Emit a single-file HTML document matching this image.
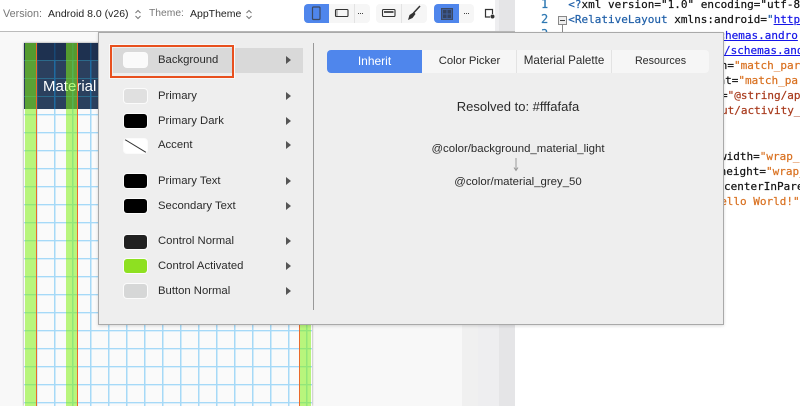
<!DOCTYPE html>
<html><head><meta charset="utf-8">
<style>
html,body{margin:0;padding:0;width:800px;height:406px;overflow:hidden;background:#fff}
body{position:relative;font-family:"Liberation Sans",sans-serif;color:#2a2a2a}
div,span.a{position:absolute}
.t{white-space:nowrap;font-size:11.300px;line-height:16px}
.c{position:absolute;white-space:pre;font:11px/15px "DejaVu Sans Mono",monospace;color:#111;-webkit-text-stroke:.2px}
.b{color:#1f5fa8}.u{color:#1515e8;text-decoration:underline}.o{color:#d9701f}.r{color:#a83a1c}
.g{position:absolute;background:rgba(130,240,20,.55)}
.ol{position:absolute;width:1px;background:#ea6a2a}
.sw{left:124px;width:23px;height:14px;border-radius:3px;box-shadow:0 0 0 1px #fbfbfb}
.ar{left:286px;width:0;height:0;border-left:5px solid #555;border-top:4.5px solid transparent;border-bottom:4.5px solid transparent}
.lab{left:158px}
.tab{top:50px;height:23px;line-height:22px;text-align:center;font-size:11.300px;white-space:nowrap}
</style></head><body>

<!-- top bar -->
<div style="left:0;top:0;width:800px;height:31px;background:#fff"></div>
<div class="t" style="left:3px;top:6px;color:#777;font-size:10.800px">Version:</div>
<div class="t" style="left:48px;top:6px;color:#222;font-size:10.500px">Android 8.0 (v26)</div>
<svg style="position:absolute;left:134px;top:9px" width="8" height="11"><path d="M1.500 4L4 1.500L6.500 4M1.500 7L4 9.500L6.500 7" fill="none" stroke="#777" stroke-width="1"/></svg>
<div class="t" style="left:149px;top:6px;color:#777;font-size:10.300px">Theme:</div>
<div class="t" style="left:190px;top:6px;color:#222;font-size:10.500px">AppTheme</div>
<svg style="position:absolute;left:245px;top:9px" width="8" height="11"><path d="M1.500 4L4 1.500L6.500 4M1.500 7L4 9.500L6.500 7" fill="none" stroke="#777" stroke-width="1"/></svg>

<!-- toolbar groups -->
<div style="left:304px;top:4px;width:66px;height:19px;background:#f6f6f6;border-radius:4px"></div>
<div style="left:304px;top:4px;width:25px;height:19px;background:#4f86ec;border-radius:4px 0 0 4px"></div>
<div style="left:354px;top:4px;width:1px;height:19px;background:#e3e3e3"></div>
<div style="left:376px;top:4px;width:51px;height:19px;background:#f6f6f6;border-radius:4px"></div>
<div style="left:401px;top:4px;width:1px;height:19px;background:#e3e3e3"></div>
<div style="left:434px;top:4px;width:40px;height:19px;background:#f6f6f6;border-radius:4px"></div>
<div style="left:434px;top:4px;width:25px;height:19px;background:#4f86ec;border-radius:4px 0 0 4px"></div>
<svg style="position:absolute;left:300px;top:0" width="200" height="30" fill="none">
<rect x="12.500" y="7" width="7.500" height="12.500" rx="1" stroke="#3c4a63" stroke-width="1.200"/>
<rect x="35.500" y="9.500" width="12.500" height="7" rx="1" stroke="#333" stroke-width="1.100"/>
<path d="M37 10v6" stroke="#888" stroke-width="1"/>
<path d="M58 13.500h1M60 13.500h1M62 13.500h1" stroke="#444" stroke-width="1"/>
<rect x="82.500" y="9.500" width="12.500" height="7" rx="1" stroke="#333" stroke-width="1.100"/>
<rect x="84" y="11" width="9.500" height="2" fill="#555"/>
<path d="M120 6L113.500 13" stroke="#333" stroke-width="1.500"/>
<path d="M114 12L109.500 15L108 20L112.500 18L115.500 14Z" fill="#333"/>
<rect x="141.500" y="8.500" width="11" height="11" fill="#3f5f9c" stroke="#3d4a63" stroke-width="1"/>
<path d="M143 10h3.500v3.500h-3.500zM147.500 10h3.500v3.500h-3.500zM143 14.500h3.500v3.500h-3.500zM147.500 14.500h3.500v3.500h-3.500z" fill="#33425e"/>
<path d="M164 13.500h1M166 13.500h1M168 13.500h1" stroke="#444" stroke-width="1"/>
</svg>

<!-- background left / right -->
<div style="left:0;top:31px;width:462px;height:375px;background:#f8f8f8"></div>
<div style="left:462px;top:31px;width:16px;height:375px;background:#f0f0f0"></div>
<div style="left:478px;top:31px;width:21px;height:375px;background:#eeeef0"></div>
<div style="left:499px;top:0;width:16px;height:406px;background:#e5e5e7"></div>
<div style="left:479px;top:5px;width:20px;height:27px;background:#fff;clip-path:polygon(0 0,100% 0,100% 100%,30% 100%,0 70%)"></div>
<div style="left:495px;top:0;width:4px;height:32px;background:#eeeef0"></div>
<svg style="position:absolute;left:483px;top:8px" width="14" height="12" fill="none"><path d="M7 9H2.500V1.500H9.500V6" stroke="#333" stroke-width="1.200"/><circle cx="9.500" cy="8.500" r="2" fill="#333"/></svg>
<div style="left:0;top:31px;width:515px;height:1px;background:#bbb"></div>

<!-- code editor -->
<div class="c" style="left:541px;top:-3px;color:#2f79b3;font-size:12px">1</div>
<div class="c" style="left:541px;top:12px;color:#2f79b3;font-size:12px">2</div>
<div class="c" style="left:541px;top:27px;color:#2f79b3;font-size:12px">3</div>
<div style="left:558px;top:16px;width:7px;height:7px;border:1px solid #888;background:#eee"></div>
<div style="left:560px;top:20px;width:5px;height:1px;background:#444"></div>
<div style="left:562px;top:25px;width:1px;height:10px;background:#888"></div>
<div class="c" style="left:568.300px;top:-3px"><span class="b">&lt;?</span>xml version="1.0" encoding="utf-8</div>
<div class="c" style="left:568.300px;top:12px"><span class="b">&lt;RelativeLayout</span> xmlns:android=<span class="b">"</span><span class="u">http</span></div>
<div class="c u" style="left:718.400px;top:28px;color:#1515e8">chemas.andro</div>
<div class="c u" style="left:724px;top:43px;color:#1515e8">/schemas.and</div>
<div class="c" style="left:720.800px;top:58px">n=<span class="o">"match_par-</span></div>
<div class="c" style="left:718.500px;top:73px">ht=<span class="o">"match_pa</span></div>
<div class="c" style="left:721px;top:88px">=<span class="r">"@string/ap</span></div>
<div class="c r" style="left:721px;top:103px;color:#a83a1c">ut/activity_m</div>
<div class="c" style="left:720px;top:149px">width=<span class="o">"wrap_</span></div>
<div class="c" style="left:719.600px;top:164px">height=<span class="o">"wrap_</span></div>
<div class="c" style="left:724px;top:179px">centerInPare</div>
<div class="c o" style="left:720.200px;top:194px;color:#d9701f">ello World!"</div>

<!-- phone preview -->
<div style="left:24px;top:43px;width:288px;height:363px;background-color:#fafafa;box-shadow:0 0 2px #888;
background-image:linear-gradient(90deg,#a6d9f7 0,#a6d9f7 1.500px,transparent 1.500px),linear-gradient(180deg,#a6d9f7 0,#a6d9f7 1.200px,#dbeffb 1.200px,#dbeffb 2.200px,transparent 2.200px);
background-size:18px 18px;background-position:12px 17px"></div>
<div style="left:24px;top:43px;width:288px;height:66px;background-color:#2b405e;
background-image:linear-gradient(90deg,#1f6aa0 0,#1f6aa0 1.300px,transparent 1.300px),linear-gradient(180deg,#2c6a8a 0,#2c6a8a 1px,transparent 1px);
background-size:18px 18px;background-position:12px 17px"></div>
<div style="left:24px;top:43px;width:288px;height:17px;background:rgba(15,30,65,.45)"></div>
<div class="t" style="left:43px;top:78px;color:#fff;font-size:15px;line-height:18px">Material</div>
<div class="g" style="left:25px;top:43px;width:11px;height:363px"></div>
<div class="g" style="left:66px;top:43px;width:11px;height:363px"></div>
<div class="g" style="left:300px;top:43px;width:11px;height:363px"></div>
<div class="ol" style="left:36px;top:43px;height:363px"></div>
<div class="ol" style="left:77px;top:43px;height:363px"></div>
<div class="ol" style="left:299px;top:43px;height:363px"></div>

<!-- popup panel -->
<div style="left:98px;top:32px;width:624px;height:291px;background:#eeeeee;border:1px solid #a9a9a9;box-shadow:0 1px 3px rgba(0,0,0,.15)"></div>
<div style="left:113px;top:48px;width:190px;height:25px;background:#d9d9d9"></div>
<div style="left:313px;top:43px;width:1px;height:267px;background:#999"></div>

<!-- swatches -->
<div class="sw" style="top:53px;background:#fafafa"></div>
<div class="sw" style="top:89px;background:#e0e0e0"></div>
<div class="sw" style="top:114px;background:#000"></div>
<div class="sw" style="top:139px;background:#fff;overflow:hidden"><svg width="23" height="14" style="display:block"><path d="M0 0L23 14" stroke="#333" stroke-width="1"/></svg></div>
<div class="sw" style="top:174px;background:#000"></div>
<div class="sw" style="top:199px;background:#000"></div>
<div class="sw" style="top:235px;background:#212121"></div>
<div class="sw" style="top:259px;background:#8ee021"></div>
<div class="sw" style="top:284px;background:#d6d7d7"></div>

<div class="t lab" style="top:52px">Background</div>
<div class="t lab" style="top:88px">Primary</div>
<div class="t lab" style="top:113px">Primary Dark</div>
<div class="t lab" style="top:137px">Accent</div>
<div class="t lab" style="top:173px">Primary Text</div>
<div class="t lab" style="top:198px">Secondary Text</div>
<div class="t lab" style="top:233px">Control Normal</div>
<div class="t lab" style="top:258px">Control Activated</div>
<div class="t lab" style="top:283px">Button Normal</div>

<div class="ar" style="top:56px"></div>
<div class="ar" style="top:92px"></div>
<div class="ar" style="top:117px"></div>
<div class="ar" style="top:141px"></div>
<div class="ar" style="top:177px"></div>
<div class="ar" style="top:202px"></div>
<div class="ar" style="top:237px"></div>
<div class="ar" style="top:262px"></div>
<div class="ar" style="top:287px"></div>

<!-- highlight rect -->
<div style="left:110px;top:45px;width:120px;height:29px;border:2px solid #e8501e;box-shadow:0 0 0 1px #f8f8f8"></div>

<!-- tabs -->
<div style="left:327px;top:50px;width:382px;height:23px;background:#f6f6f6;border-radius:4px"></div>
<div class="tab" style="left:327px;width:95px;background:#4f86ec;color:#fff;border-radius:4px 0 0 4px;font-size:12px">Inherit</div>
<div class="tab" style="left:422px;width:95px">Color Picker</div>
<div style="left:516px;top:50px;width:1px;height:23px;background:#e3e3e3"></div>
<div class="tab" style="left:517px;width:94px;font-size:11.600px">Material Palette</div>
<div style="left:611px;top:50px;width:1px;height:23px;background:#e3e3e3"></div>
<div class="tab" style="left:612px;width:97px;font-size:10.700px">Resources</div>

<!-- resolved -->
<div class="t" style="left:318px;width:400px;text-align:center;top:99px;font-size:13px">Resolved to: #fffafafa</div>
<div class="t" style="left:318px;width:400px;text-align:center;top:141px;font-size:11.400px">@color/background_material_light</div>
<svg style="position:absolute;left:512px;top:158px" width="8" height="14" fill="none"><path d="M4 0V12M2 9.500L4 12.500L6 9.500" stroke="#999" stroke-width="1"/></svg>
<div class="t" style="left:318px;width:400px;text-align:center;top:174px;font-size:11.400px">@color/material_grey_50</div>

</body></html>
